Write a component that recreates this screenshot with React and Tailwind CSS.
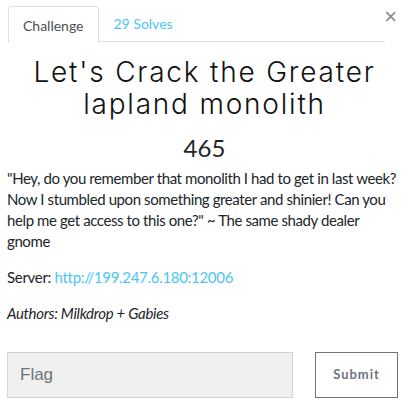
export default function App() {
  return (
    <div className="w-[409px] h-[409px] bg-white overflow-hidden relative font-['Lato',sans-serif] text-[#212529]">
      <button className="absolute right-[12px] top-[6px] text-[22px] leading-none text-[#888] font-['Liberation_Sans',sans-serif]">
        ×
      </button>
      <div className="flex items-end pl-[8px] pr-[24px] pt-[5px]">
        <div className="border border-b-0 border-[#dee2e6] rounded-t-[4px] bg-white h-[37px] px-[14px] flex items-center text-[14px] text-[#495057] relative top-[1px]">
          Challenge
        </div>
        <div className="flex-1 border-b border-[#dee2e6] h-[36px] flex items-center pl-[15px] text-[14px] text-[#4bc6f4]">
          29 Solves
        </div>
      </div>
      <div className="px-[7px]">
        <h3 className="mt-[14px] text-center text-[28px] leading-[32px] font-light font-['Inter',sans-serif] tracking-[1.8px] text-[#111]">
          Let's Crack the Greater
          <br />
          lapland monolith
        </h3>
        <h4 className="mt-[14px] text-center text-[24px] leading-[28px]">465</h4>
        <p className="mt-[6px] text-[15px] leading-[21px] tracking-[-0.4px]">
          "Hey, do you remember that monolith I had to get in last week? Now I stumbled upon something greater and shinier! Can you help me get access to this one?" ~ The same shady dealer gnome
        </p>
        <p className="mt-[15px] text-[15px] leading-[21px] tracking-[-0.3px]">
          Server: <a className="text-[#4bc6f4]">http://199.247.6.180:12006</a>
        </p>
        <p className="mt-[15px] text-[15px] leading-[21px] italic tracking-[-0.3px]">Authors: Milkdrop + Gabies</p>
        <div className="mt-[28px] flex items-center gap-[22px]">
          <input
            placeholder="Flag"
            className="w-[286px] h-[46px] bg-[#f0f0f0] border border-[#ced4da] px-[12px] text-[17px] font-['Liberation_Sans',sans-serif] placeholder:text-[#6c757d] outline-none"
          />
          <button className="w-[83px] h-[46px] border border-[#6c757d] text-[13px] font-bold tracking-[1px] text-[#6c757d]">
            Submit
          </button>
        </div>
      </div>
    </div>
  );
}
